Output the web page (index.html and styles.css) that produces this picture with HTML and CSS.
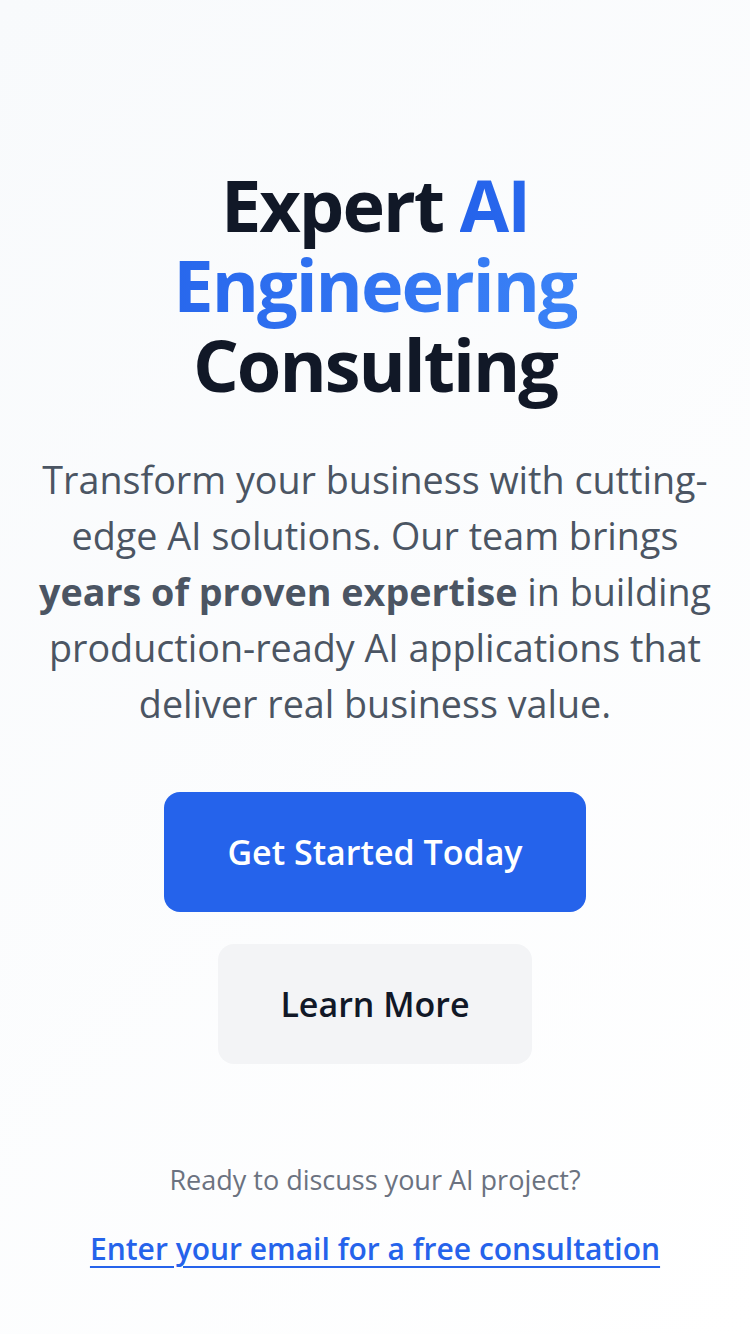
FILE: index.html
```html
<!DOCTYPE html>
<html lang="en">
<head>
<meta charset="utf-8">
<title>Expert AI Engineering Consulting</title>
<link rel="stylesheet" href="styles.css">
</head>
<body>
<main class="hero">
  <h1 class="title">Expert <span class="accent">AI Engineering</span> Consulting</h1>
  <p class="lead">Transform your business with cutting-edge AI solutions. Our team brings <strong>years of proven expertise</strong> in building production-ready AI applications that deliver real business value.</p>
  <div class="actions">
    <a class="btn btn-primary" href="#">Get Started Today</a>
    <a class="btn btn-secondary" href="#">Learn More</a>
  </div>
  <div class="contact">
    <p class="contact-q">Ready to discuss your AI project?</p>
    <a class="contact-link" href="#">Enter your email for a free consultation</a>
  </div>
</main>
</body>
</html>
```

FILE: styles.css
```css
* { box-sizing: border-box; }
html, body { margin: 0; padding: 0; }
body {
  min-height: 1334px;
  font-family: "Open Sans", "Noto Sans", "Liberation Sans", sans-serif;
  background: linear-gradient(135deg, #f8fafc 0%, #ffffff 100%);
  color: #111827;
}
.hero {
  display: flex;
  flex-direction: column;
  align-items: center;
  text-align: center;
  padding: 164px 28px 0;
}
.title {
  margin: 0;
  width: 440px;
  font-size: 72px;
  line-height: 80px;
  font-weight: 700;
  color: #111827;
  letter-spacing: -2px;
}
.accent {
  background: linear-gradient(90deg, #2563eb, #3b82f6);
  -webkit-background-clip: text;
  background-clip: text;
  color: transparent;
}
.lead {
  margin: 48px 0 0;
  font-size: 37.7px;
  line-height: 56px;
  color: #4b5563;
  max-width: 694px;
}
.lead strong { font-weight: 700; color: #4b5563; }
.actions {
  margin-top: 60px;
  display: flex;
  flex-direction: column;
  align-items: center;
  gap: 32px;
}
.btn {
  display: flex;
  align-items: center;
  justify-content: center;
  height: 120px;
  border-radius: 16px;
  font-size: 34px;
  font-weight: 600;
  text-decoration: none;
}
.btn-primary {
  width: 422px;
  background: #2563eb;
  color: #ffffff;
}
.btn-secondary {
  width: 314px;
  background: #f3f4f6;
  color: #111827;
}
.contact {
  margin-top: 96px;
  display: flex;
  flex-direction: column;
  align-items: center;
  gap: 29px;
}
.contact-q {
  margin: 0;
  font-size: 27px;
  line-height: 40px;
  color: #6b7280;
}
.contact-link {
  font-size: 30px;
  line-height: 40px;
  font-weight: 600;
  color: #2563eb;
  text-decoration: underline;
  text-underline-offset: 6px;
  text-decoration-thickness: 2px;
}
```
